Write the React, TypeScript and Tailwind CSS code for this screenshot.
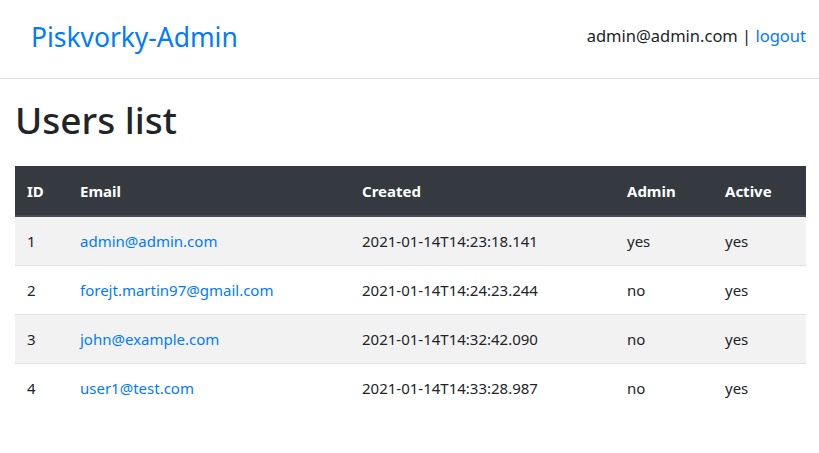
import React from "react";

interface User {
  id: number;
  email: string;
  created: string;
  admin: boolean;
  active: boolean;
}

const users: User[] = [
  { id: 1, email: "admin@admin.com", created: "2021-01-14T14:23:18.141", admin: true, active: true },
  { id: 2, email: "forejt.martin97@gmail.com", created: "2021-01-14T14:24:23.244", admin: false, active: true },
  { id: 3, email: "john@example.com", created: "2021-01-14T14:32:42.090", admin: false, active: true },
  { id: 4, email: "user1@test.com", created: "2021-01-14T14:33:28.987", admin: false, active: true },
];

export default function App() {
  return (
    <div className="min-h-screen bg-white text-[#212529] font-['Segoe_UI','Noto_Sans',sans-serif]">
      <nav className="h-[79px] border-b border-[#dee2e6] flex items-center justify-between pl-[31px] pr-[13px]">
        <a href="#" className="text-[26.4px] leading-none text-[#007bff] pb-[3px]">
          Piskvorky-Admin
        </a>
        <div className="text-[16.5px] pb-[6px]">
          admin@admin.com | <a href="#" className="text-[#007bff]">logout</a>
        </div>
      </nav>

      <main className="px-[15px]">
        <h1 className="text-[37px] font-medium leading-tight mt-[18px] mb-[23px]">Users list</h1>

        <table className="w-[791px] border-collapse text-[15px] text-left">
          <thead>
            <tr className="bg-[#343a40] text-white h-[50px] border-b-2 border-[#454d55]">
              <th className="w-[53px] px-3 font-bold">ID</th>
              <th className="w-[282px] px-3 font-bold">Email</th>
              <th className="w-[265px] px-3 font-bold">Created</th>
              <th className="w-[98px] px-3 font-bold">Admin</th>
              <th className="px-3 font-bold">Active</th>
            </tr>
          </thead>
          <tbody>
            {users.map((u, i) => (
              <tr
                key={u.id}
                className={`h-[49px] border-t border-[#dee2e6] ${i % 2 === 0 ? "bg-[#f2f2f2]" : "bg-white"}`}
              >
                <td className="px-3">{u.id}</td>
                <td className="px-3">
                  <a href="#" className="text-[#007bff]">{u.email}</a>
                </td>
                <td className="px-3">{u.created}</td>
                <td className="px-3">{u.admin ? "yes" : "no"}</td>
                <td className="px-3">{u.active ? "yes" : "no"}</td>
              </tr>
            ))}
          </tbody>
        </table>
      </main>
    </div>
  );
}
